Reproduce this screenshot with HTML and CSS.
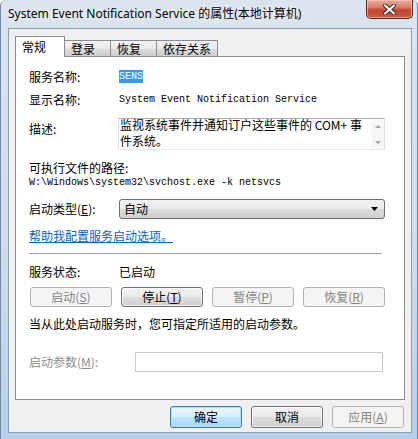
FILE: index.html
```html
<!DOCTYPE html>
<html lang="zh-CN">
<head>
    <meta charset="UTF-8">
    <title>System Event Notification Service 的属性(本地计算机)</title>
    <link rel="stylesheet" href="styles.css">
</head>
<body>
    <div class="window">
        <div class="titlebar">
            <span class="title">System Event Notification Service 的属性(本地计算机)</span>
            <button class="close" title="关闭">
                <svg width="13" height="11" viewBox="0 0 13 11">
                    <path d="M2 1.5 L11 9.5 M11 1.5 L2 9.5" stroke="#3b2020" stroke-width="4" stroke-linecap="round"/>
                    <path d="M2 1.5 L11 9.5 M11 1.5 L2 9.5" stroke="#ffffff" stroke-width="2.2" stroke-linecap="round"/>
                </svg>
            </button>
        </div>

        <div class="dialog">
            <div class="tabs">
                <div class="tab active">常规</div>
                <div class="tab">登录</div>
                <div class="tab">恢复</div>
                <div class="tab">依存关系</div>
            </div>

            <div class="panel">
                <div class="field">
                    <span class="label">服务名称:</span>
                    <span class="mono"><span class="selected">SENS</span></span>
                </div>
                <div class="field gap-7">
                    <span class="label">显示名称:</span>
                    <span class="mono">System Event Notification Service</span>
                </div>
                <div class="field desc-row">
                    <span class="label desc-label">描述:</span>
                    <div class="desc">
                        <div class="desc-text">
                            <div>监视系统事件并通知订户这些事件的 COM+ 事</div>
                            <div>件系统。</div>
                        </div>
                        <div class="scrollbar">
                            <span class="arrow up"></span>
                            <span class="arrow down"></span>
                        </div>
                    </div>
                </div>

                <div class="path-label">可执行文件的路径:</div>
                <div class="mono path">W:\Windows\system32\svchost.exe -k netsvcs</div>

                <div class="field combo-row">
                    <span class="label">启动类型(<u>E</u>):</span>
                    <div class="combo">
                        <span>自动</span>
                        <svg width="7" height="4" viewBox="0 0 7 4"><path d="M0 0 H7 L3.5 4 Z" fill="#000"/></svg>
                    </div>
                </div>

                <a class="help-link" href="#">帮助我配置服务启动选项。</a>

                <div class="separator"></div>

                <div class="field status-row">
                    <span class="label">服务状态:</span>
                    <span>已启动</span>
                </div>

                <div class="service-buttons">
                    <button class="btn" disabled>启动(<u>S</u>)</button>
                    <button class="btn">停止(<u>T</u>)</button>
                    <button class="btn" disabled>暂停(<u>P</u>)</button>
                    <button class="btn" disabled>恢复(<u>R</u>)</button>
                </div>

                <p class="hint">当从此处启动服务时，您可指定所适用的启动参数。</p>

                <div class="field params-row">
                    <span class="label disabled">启动参数(<u>M</u>):</span>
                    <input class="params" type="text" disabled>
                </div>
            </div>

            <div class="actions">
                <button class="btn big default">确定</button>
                <button class="btn big">取消</button>
                <button class="btn big" disabled>应用(<u>A</u>)</button>
            </div>
        </div>
    </div>
</body>
</html>
```

FILE: styles.css
```css
/* Windows 7 style property sheet */
body {
    margin: 0;
    font-family: "Noto Sans CJK SC", sans-serif;
    font-size: 12px;
    color: #000;
}

.window {
    width: 418px;
    height: 439px;
    box-sizing: border-box;
    display: flex;
    flex-direction: column;
    background: linear-gradient(to bottom, #dbe4ee 0%, #d2ddea 55%, #b6cfea 100%);
    border-left: 1px solid #6f8aa8;
    border-right: 1px solid #6f8aa8;
    border-radius: 6px 6px 0 0;
}

.titlebar {
    height: 28px;
    display: flex;
    justify-content: space-between;
    align-items: flex-start;
    padding-left: 7px;
    padding-right: 4px;
}

.title {
    line-height: 27px;
    font-family: "Noto Sans", "Noto Sans CJK SC", sans-serif;
    font-size: 12px;
    white-space: nowrap;
    text-shadow: 0 0 6px #fff;
}

.close {
    width: 47px;
    height: 19px;
    padding: 0;
    display: flex;
    align-items: center;
    justify-content: center;
    border: 1px solid #5a2a26;
    border-top: none;
    border-radius: 0 0 5px 5px;
    background: linear-gradient(to bottom, #e9a998 0%, #d8806c 40%, #c5452f 55%, #c95a3f 100%);
    box-shadow: inset 0 0 0 1px rgba(255, 220, 210, 0.5);
}

.dialog {
    flex: 1;
    margin: 0 5px 6px 7px;
    padding: 7px 6px 0 6px;
    background-color: #f0f0f0;
    border: 1px solid #8d9db0;
}

/* Tabs */
.tabs {
    height: 20px;
    display: flex;
    align-items: flex-end;
}

.tab {
    box-sizing: border-box;
    min-width: 47px;
    height: 16px;
    padding: 0 6px;
    line-height: 15px;
    border: 1px solid #898c95;
    border-bottom: none;
    margin-left: -1px;
    background: linear-gradient(to bottom, #f3f3f3 0%, #ebebeb 50%, #dddddd 51%, #cfcfcf 100%);
}

.tab.active {
    position: relative;
    z-index: 1;
    min-width: 50px;
    height: 21px;
    margin-left: 0;
    margin-bottom: -1px;
    line-height: 19px;
    background: #fff;
}

.panel {
    height: 344px;
    box-sizing: border-box;
    padding: 12px 19px 0 13px;
    background-color: #fff;
    border: 1px solid #898c95;
}

/* Rows */
.field {
    display: flex;
    align-items: flex-start;
    line-height: 16px;
}

.label {
    width: 90px;
    flex-shrink: 0;
    white-space: nowrap;
}

.label.disabled {
    width: 108px;
    color: #8d8d8d;
}

.gap-7 {
    margin-top: 7px;
}

.mono {
    font-family: "Liberation Mono", "Noto Sans CJK SC", monospace;
    font-size: 10px;
    white-space: nowrap;
}

.selected {
    background-color: #3399ff;
    color: #fff;
    padding: 1px 0;
}

.desc-row {
    margin-top: 10px;
}

.desc-label {
    padding-top: 3px;
}

.desc {
    width: 267px;
    height: 32px;
    box-sizing: border-box;
    margin-left: -1px;
    display: flex;
    border: 1px solid #abadb3;
    border-color: #abadb3 #dbdfe6 #e3e9ef #e2e3ea;
}

.desc-text {
    flex: 1;
    margin-top: -2px;
    padding-left: 1px;
    line-height: 16px;
    white-space: nowrap;
}

.scrollbar {
    width: 13px;
    display: flex;
    flex-direction: column;
    justify-content: space-between;
    align-items: center;
    padding: 6px 0 5px;
    background-color: #f7f7f7;
}

.arrow {
    width: 0;
    height: 0;
    border-left: 3px solid transparent;
    border-right: 3px solid transparent;
}

.arrow.up {
    border-bottom: 3px solid #a3a3a3;
}

.arrow.down {
    border-top: 3px solid #a3a3a3;
}

.path-label {
    margin-top: 10px;
    line-height: 16px;
}

.path {
    line-height: 14px;
}

.combo-row {
    margin-top: 9px;
    line-height: 20px;
}

.combo {
    width: 266px;
    height: 20px;
    box-sizing: border-box;
    display: flex;
    justify-content: space-between;
    align-items: center;
    padding: 0 6px 0 4px;
    line-height: 18px;
    border: 1px solid #707070;
    border-radius: 3px;
    background: linear-gradient(to bottom, #f2f2f2 0%, #ebebeb 50%, #dddddd 51%, #cfcfcf 100%);
}

.help-link {
    display: inline-block;
    margin-top: 9px;
    line-height: 16px;
    color: #0066cc;
}

.separator {
    margin: 9px 3px 0 0;
    border-top: 1px solid #a0a0a0;
}

.status-row {
    margin-top: 10px;
}

.service-buttons {
    display: grid;
    grid-template-columns: repeat(4, 1fr);
    gap: 9px;
    margin: 7px 0 0 1px;
}

.btn {
    height: 20px;
    padding: 0;
    font-family: "Noto Sans CJK SC", sans-serif;
    font-size: 12px;
    line-height: 18px;
    color: #000;
    border: 1px solid #707070;
    border-radius: 3px;
    background: linear-gradient(to bottom, #f2f2f2 0%, #ebebeb 50%, #dddddd 51%, #cfcfcf 100%);
    box-shadow: inset 0 0 0 1px rgba(255, 255, 255, 0.7);
}

.btn:disabled {
    color: #838383;
    border-color: #adb2b5;
    background: #f4f4f4;
    box-shadow: none;
}

.hint {
    margin: 9px 0 0;
    line-height: 16px;
}

.params-row {
    margin-top: 20px;
    line-height: 20px;
}

.params {
    width: 248px;
    height: 20px;
    box-sizing: border-box;
    margin: 0 0 0 -2px;
    border: 1px solid #c9cbcf;
    background-color: #fff;
}

/* Bottom buttons */
.actions {
    display: flex;
    justify-content: flex-end;
    gap: 9px;
    margin: 6px 1px 0 0;
}

.btn.big {
    width: 72px;
    height: 22px;
    line-height: 20px;
}

.btn.default {
    border-color: #3c7fb1;
    box-shadow: inset 0 0 0 1px #b4ddf3;
    background: linear-gradient(to bottom, #eaf6fd 0%, #d9f0fc 50%, #bee6fd 51%, #a7d9f5 100%);
}
```
